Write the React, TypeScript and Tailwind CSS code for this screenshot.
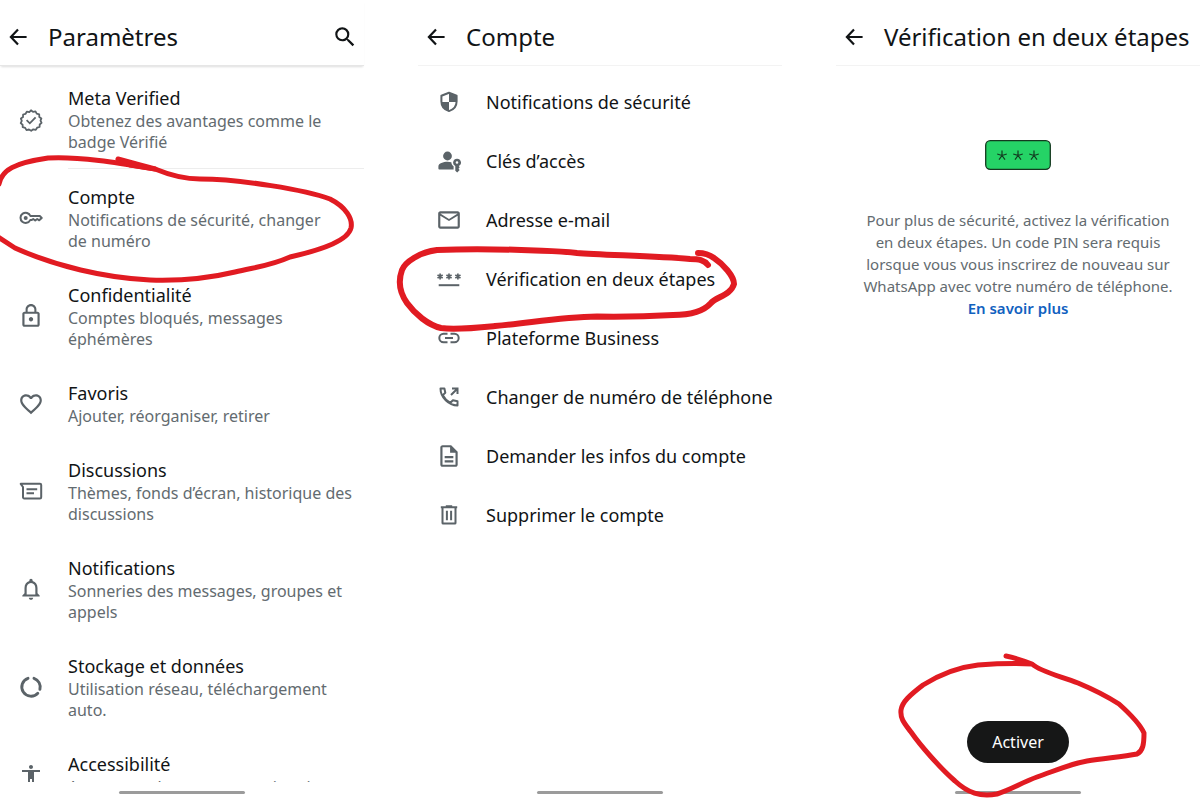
import type { ReactNode } from "react";
import {
  MdAccessibility,
  MdFavoriteBorder,
  MdLockOutline,
  MdMailOutline,
  MdNotificationsNone,
  MdOutlineDescription,
  MdSearch,
} from "react-icons/md";

const stroke = {
  viewBox: "0 0 24 24",
  fill: "none",
  stroke: "currentColor",
  strokeWidth: 2,
  className: "h-6 w-6",
};

const ArrowIcon = () => (
  <svg viewBox="0 0 24 24" fill="none" stroke="currentColor" strokeWidth="2.2" className="h-6 w-6">
    <path d="M20.600 12H5.400M12 4.400L4.900 12l7.100 7.600" />
  </svg>
);

const VerifiedIcon = () => (
  <svg {...stroke} strokeWidth={1.8}>
    <path
      d="M12 2.300l2 1.600 2.500-.5 1.200 2.200 2.500.7.1 2.600 2.100 1.500-.9 2.300 1.100 2.200-1.900 1.600-.1 2.500-2.500.7-1.300 2.200-2.500-.6-2.100 1.500-2.200-1.300-2.500.6-1.300-2.200-2.500-.7-.1-2.500-1.900-1.600 1.100-2.200-.9-2.300 2.100-1.500.1-2.600 2.500-.7 1.200-2.200 2.500.5z"
      strokeLinejoin="round"
    />
    <path d="M7.600 12.200l3.200 3.100 5.800-6" />
  </svg>
);

const KeyIcon = () => (
  <svg {...stroke}>
    <path d="M11.400 10h9.400l1.900 2-2.500 2.300-2-1.300-2 1.500-2-1.500-1.700 1.100h-1.300A5.100 5.100 0 1 1 11.400 10z" strokeLinejoin="round" />
    <circle cx="6.700" cy="12" r="2" fill="currentColor" stroke="none" />
  </svg>
);

const ChatIcon = () => (
  <svg {...stroke}>
    <path d="M1.700 4.800H21a1.200 1.200 0 0 1 1.200 1.200v12.200a1.200 1.200 0 0 1-1.200 1.200H5.200A1.200 1.200 0 0 1 4 18.200V8z" strokeLinejoin="round" />
    <path d="M7.500 10.200h10.700M7.500 14.200h7.500" />
  </svg>
);

const StorageIcon = () => (
  <svg {...stroke} strokeWidth={2.900} strokeLinecap="round">
    <path d="M9 3.300A9.200 9.200 0 1 0 18.800 18.200" />
    <path d="M15 3.300a9.200 9.200 0 0 1 5.900 11" />
  </svg>
);

const ShieldIcon = () => (
  <svg {...stroke}>
    <path d="M12 2.800l7.600 2.900v5.800c0 4.600-3 8.200-7.600 9.600-4.600-1.400-7.600-5-7.600-9.600V5.700z" strokeLinejoin="round" />
    <path d="M12 2.800l7.600 2.900V12H12zM12 12v9.100C7.400 19.700 4.700 16.300 4.400 12z" fill="currentColor" stroke="none" />
  </svg>
);

const PasskeyIcon = () => (
  <svg viewBox="0 0 24 24" fill="currentColor" className="h-6 w-6">
    <circle cx="10.500" cy="7" r="4.400" />
    <path d="M2.300 20.500a.9.900 0 0 1-.9-.9v-2.200c0-3.200 5.100-4.700 9.100-4.700 1.500 0 2.700.2 3.800.5.200 1.900 1 3.200 2.300 4v3.300z" />
    <path fillRule="evenodd" d="M20 9.700a3.900 3.900 0 0 1 1.800 7.400l.9 1.200-1.200 1.400 1.200 1.400-2.500 2.300-1.900-1.600v-4.700A3.900 3.900 0 0 1 20 9.700zm0 2.500a1.300 1.300 0 1 0 0 2.600 1.300 1.300 0 0 0 0-2.600z" />
  </svg>
);

const PinIcon = () => (
  <svg viewBox="0 0 24 24" fill="none" stroke="currentColor" strokeWidth="1.700" className="h-6 w-6 overflow-visible">
    <path d="M1.700 18.200h20.600" strokeWidth="2" />
    <path d="M3.100 6.600v6M.5 8.100l5.200 3M5.700 8.100l-5.200 3" />
    <path d="M12 6.600v6M9.400 8.100l5.200 3M14.600 8.100l-5.200 3" />
    <path d="M20.900 6.600v6M18.300 8.100l5.200 3M23.500 8.100l-5.200 3" />
  </svg>
);

const LinkIcon = () => (
  <svg {...stroke}>
    <path d="M10.500 7.700H6.600a4.300 4.300 0 0 0 0 8.600h3.900M13.500 7.700h3.900a4.300 4.300 0 0 1 0 8.600h-3.900M8 12h8" />
  </svg>
);

const PhoneIcon = () => (
  <svg {...stroke}>
    <path d="M3.500 3.500h3.900l.9 4.200-2.500 2.400c1.700 3.400 4.200 5.900 7.600 7.700l2.500-2.500 4.600.9v4.300C11.700 20.500 3.500 12.300 3.500 3.500z" strokeLinejoin="round" />
    <path d="M14 10l6.300-6.300M15 3.500h5.500V9" />
  </svg>
);

const TrashIcon = () => (
  <svg {...stroke}>
    <path d="M3.800 4.300h16.400M8.800 3.300h6.400" />
    <path d="M5.500 5v14.900a.6.600 0 0 0 .6.600h11.800a.6.600 0 0 0 .6-.6V5" />
    <path d="M9.900 7.800v9.400M14.100 7.800v9.400" />
  </svg>
);

const settings = [
  { title: "Meta Verified", text: "Obtenez des avantages comme le badge Vérifié", icon: <VerifiedIcon /> },
  { title: "Compte", text: "Notifications de sécurité, changer de\u00a0numéro", icon: <KeyIcon /> },
  { title: "Confidentialité", text: "Comptes bloqués, messages éphémères", icon: <MdLockOutline className="h-[26px] w-[26px]" /> },
  { title: "Favoris", text: "Ajouter, réorganiser, retirer", icon: <MdFavoriteBorder className="h-[26px] w-[26px]" /> },
  { title: "Discussions", text: "Thèmes, fonds d’écran, historique des discussions", icon: <ChatIcon /> },
  { title: "Notifications", text: "Sonneries des messages, groupes et appels", icon: <MdNotificationsNone className="h-[26px] w-[26px]" /> },
  { title: "Stockage et données", text: "Utilisation réseau, téléchargement auto.", icon: <StorageIcon /> },
  { title: "Accessibilité", text: "Augmenter le contraste, animation", icon: <MdAccessibility className="h-6 w-6" /> },
];

const account = [
  { title: "Notifications de sécurité", icon: <ShieldIcon /> },
  { title: "Clés d’accès", icon: <PasskeyIcon /> },
  { title: "Adresse e-mail", icon: <MdMailOutline className="h-[26px] w-[26px]" /> },
  { title: "Vérification en deux étapes", icon: <PinIcon /> },
  { title: "Plateforme Business", icon: <LinkIcon /> },
  { title: "Changer de numéro de téléphone", icon: <PhoneIcon /> },
  { title: "Demander les infos du compte", icon: <MdOutlineDescription className="h-[26px] w-[26px]" /> },
  { title: "Supprimer le compte", icon: <TrashIcon /> },
];

type ScreenProps = {
  title: string;
  headerClass: string;
  action?: ReactNode;
  mark: ReactNode;
  children: ReactNode;
};

const Screen = ({ title, headerClass, action, mark, children }: ScreenProps) => (
  <section className="relative flex h-screen min-w-0 flex-col">
    <header className={`flex h-[66px] shrink-0 items-center border-b px-1.5 pt-2 ${headerClass}`}>
      <button type="button" aria-label="Retour" className="mr-[18px]">
        <ArrowIcon />
      </button>
      <h1 className="flex-1 text-2xl whitespace-nowrap">{title}</h1>
      {action}
    </header>
    <div className="flex min-h-0 flex-1 flex-col overflow-hidden">{children}</div>
    <div className="flex h-[18px] shrink-0 justify-center pt-[9px]">
      <div className="h-[3px] w-[126px] rounded-full bg-[#9b9b9b]" />
    </div>
    {mark}
  </section>
);

const App = () => {
  return (
    <main className="grid grid-cols-3 gap-[54px] overflow-hidden bg-white font-['Noto_Sans',sans-serif] text-[#111416]">
      <Screen
        title="Paramètres"
        headerClass="border-[#e6e6e6] shadow-[0_2px_2px_-1px_#dedede]"
        action={
          <button type="button" aria-label="Rechercher">
            <MdSearch className="h-[26px] w-[26px]" />
          </button>
        }
        mark={
          <svg viewBox="0 150 364 140" fill="none" stroke="#e11b22" strokeWidth="5" strokeLinecap="round" strokeLinejoin="round" className="pointer-events-none absolute top-[150px] left-0 h-[140px] w-[364px]">
            <path d="M-1 184C2 170 14 163 48 158C80 156 125 164 155 169C172 176 184 179 200 179C240 179 306 190 330 199C346 207 353 219 351 228C348 240 325 249 290 257C270 266 256 267 235 272C210 278 180 281 150 280C105 278 55 266 15 248L-2 237" />
            <path d="M118 159l22 6 15 4-25-4z" fill="#e11b22" />
          </svg>
        }
      >
        <ul className="pt-1">
          {settings.map((item, i) => (
            <li key={item.title}>
              <a href="#" className="flex items-center">
                <span className="mr-1.5 flex w-[62px] shrink-0 justify-center text-[#5b6368]">{item.icon}</span>
                <span className={`flex-1 py-[15px] pr-2 ${i === 0 ? "border-b border-[#ededed]" : ""}`}>
                  <span className="block text-lg leading-[26px]">{item.title}</span>
                  <span className="block text-base leading-[21px] text-[#636b70]">{item.text}</span>
                </span>
              </a>
            </li>
          ))}
        </ul>
      </Screen>

      <Screen
        title="Compte"
        headerClass="border-[#f3f3f3]"
        mark={
          <svg viewBox="390 240 360 100" fill="none" stroke="#e11b22" strokeWidth="6" strokeLinecap="round" strokeLinejoin="round" className="pointer-events-none absolute top-[240px] -left-7 h-[100px] w-[360px]">
            <path d="M708 265C704 260 699 259 690 259C655 256 600 255 577 253C560 251 550 251 535 250.500C500 249 460 249 437 250C420 252 405 262 402 270C398 281 400 293 407 303C415 314 428 325 441 328C456 330 475 328 495 326C530 323 560 317 597 316.500C630 317 655 316 673 315C690 315 703 312 711 303C716 297 731 295 734 284C734 276 723 264 714 258C710 255 705 253 698 253" />
          </svg>
        }
      >
        <ul className="pt-1.5">
          {account.map((item) => (
            <li key={item.title}>
              <a href="#" className="flex h-[59px] items-center">
                <span className="mr-1.5 flex w-[62px] shrink-0 justify-center text-[#5b6368]">{item.icon}</span>
                <span className="text-lg whitespace-nowrap">{item.title}</span>
              </a>
            </li>
          ))}
        </ul>
      </Screen>

      <Screen
        title="Vérification en deux étapes"
        headerClass="border-[#f3f3f3]"
        mark={
          <svg viewBox="890 650 270 150" fill="none" stroke="#e11b22" strokeWidth="5" strokeLinecap="round" strokeLinejoin="round" className="pointer-events-none absolute bottom-0 left-[54px] h-[150px] w-[270px]">
            <path d="M1032 664C1012 663 992 664 978 665C960 667 939 675 923 685C910 695 902 702 901 710C900 719 905 724 911 732C920 745 940 768 955 781C968 793 980 797 997 794C1010 790 1023 782 1037 777C1057 770 1070 764 1087 761C1105 758 1122 757 1137 754C1143 751 1144 744 1144 733C1140 724 1129 713 1119 704C1105 695 1090 688 1078 683C1060 676 1041 672 1032 664C1024 661 1016 658 1006 656" />
          </svg>
        }
      >
        <div className="flex flex-1 flex-col items-center px-5 pt-[74px]">
          <svg viewBox="0 0 66 30" className="h-[30px] w-[66px] shrink-0">
            <rect x=".7" y=".7" width="64.600" height="28.600" rx="4.500" fill="#25d366" stroke="#14391f" strokeWidth="1.300" />
            <g stroke="#123d20" strokeWidth="1.200" fill="none">
              <path d="M17 10.500v5M17 15.500l-4.800-1.500M17 15.500l4.800-1.500M17 15.500l-3 4.200M17 15.500l3 4.200" />
              <path d="M33 10.500v5M33 15.500l-4.800-1.500M33 15.500l4.800-1.500M33 15.500l-3 4.200M33 15.500l3 4.200" />
              <path d="M49 10.500v5M49 15.500l-4.800-1.500M49 15.500l4.800-1.500M49 15.500l-3 4.200M49 15.500l3 4.200" />
            </g>
          </svg>
          <p className="mt-[39px] text-center text-[15px] leading-[22px] text-[#636b70]">
            Pour plus de sécurité, activez la vérification en deux étapes. Un code PIN sera requis lorsque vous vous inscrirez de nouveau sur WhatsApp avec votre numéro de téléphone.{" "}
            <a href="#" className="block font-semibold text-[#1161c0]">En savoir plus</a>
          </p>
          <button type="button" className="mt-auto mb-[19px] h-[42px] rounded-full bg-[#161717] px-[25px] text-base text-white">
            Activer
          </button>
        </div>
      </Screen>
    </main>
  );
};

export default App;
